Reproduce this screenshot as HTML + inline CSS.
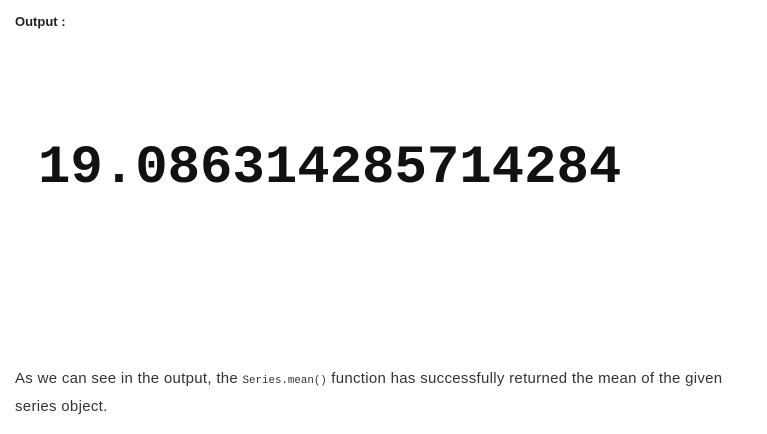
<!DOCTYPE html>
<html><head><style>
body{margin:0;width:767px;height:434px;background:#fff;position:relative;overflow:hidden;font-family:"Liberation Sans",sans-serif;}
.o{position:absolute;left:15px;top:14px;font-size:13px;font-weight:bold;color:#222;}
.n{position:absolute;left:38px;top:139px;font-family:"Liberation Mono",monospace;font-size:54px;color:#111;line-height:60px;font-weight:bold;}
.p{position:absolute;left:15px;top:366px;width:735px;font-size:15px;line-height:26px;color:#333;letter-spacing:.3px;}
code{font-family:"Liberation Mono",monospace;font-size:10.8px;color:#333;letter-spacing:0;}
</style></head><body>
<div class="o">Output :</div>
<div class="n">19.086314285714284</div>
<div class="p">As we can see in the output, the <code>Series.mean()</code> function has successfully returned the mean of the given series object.</div>
</body></html>
